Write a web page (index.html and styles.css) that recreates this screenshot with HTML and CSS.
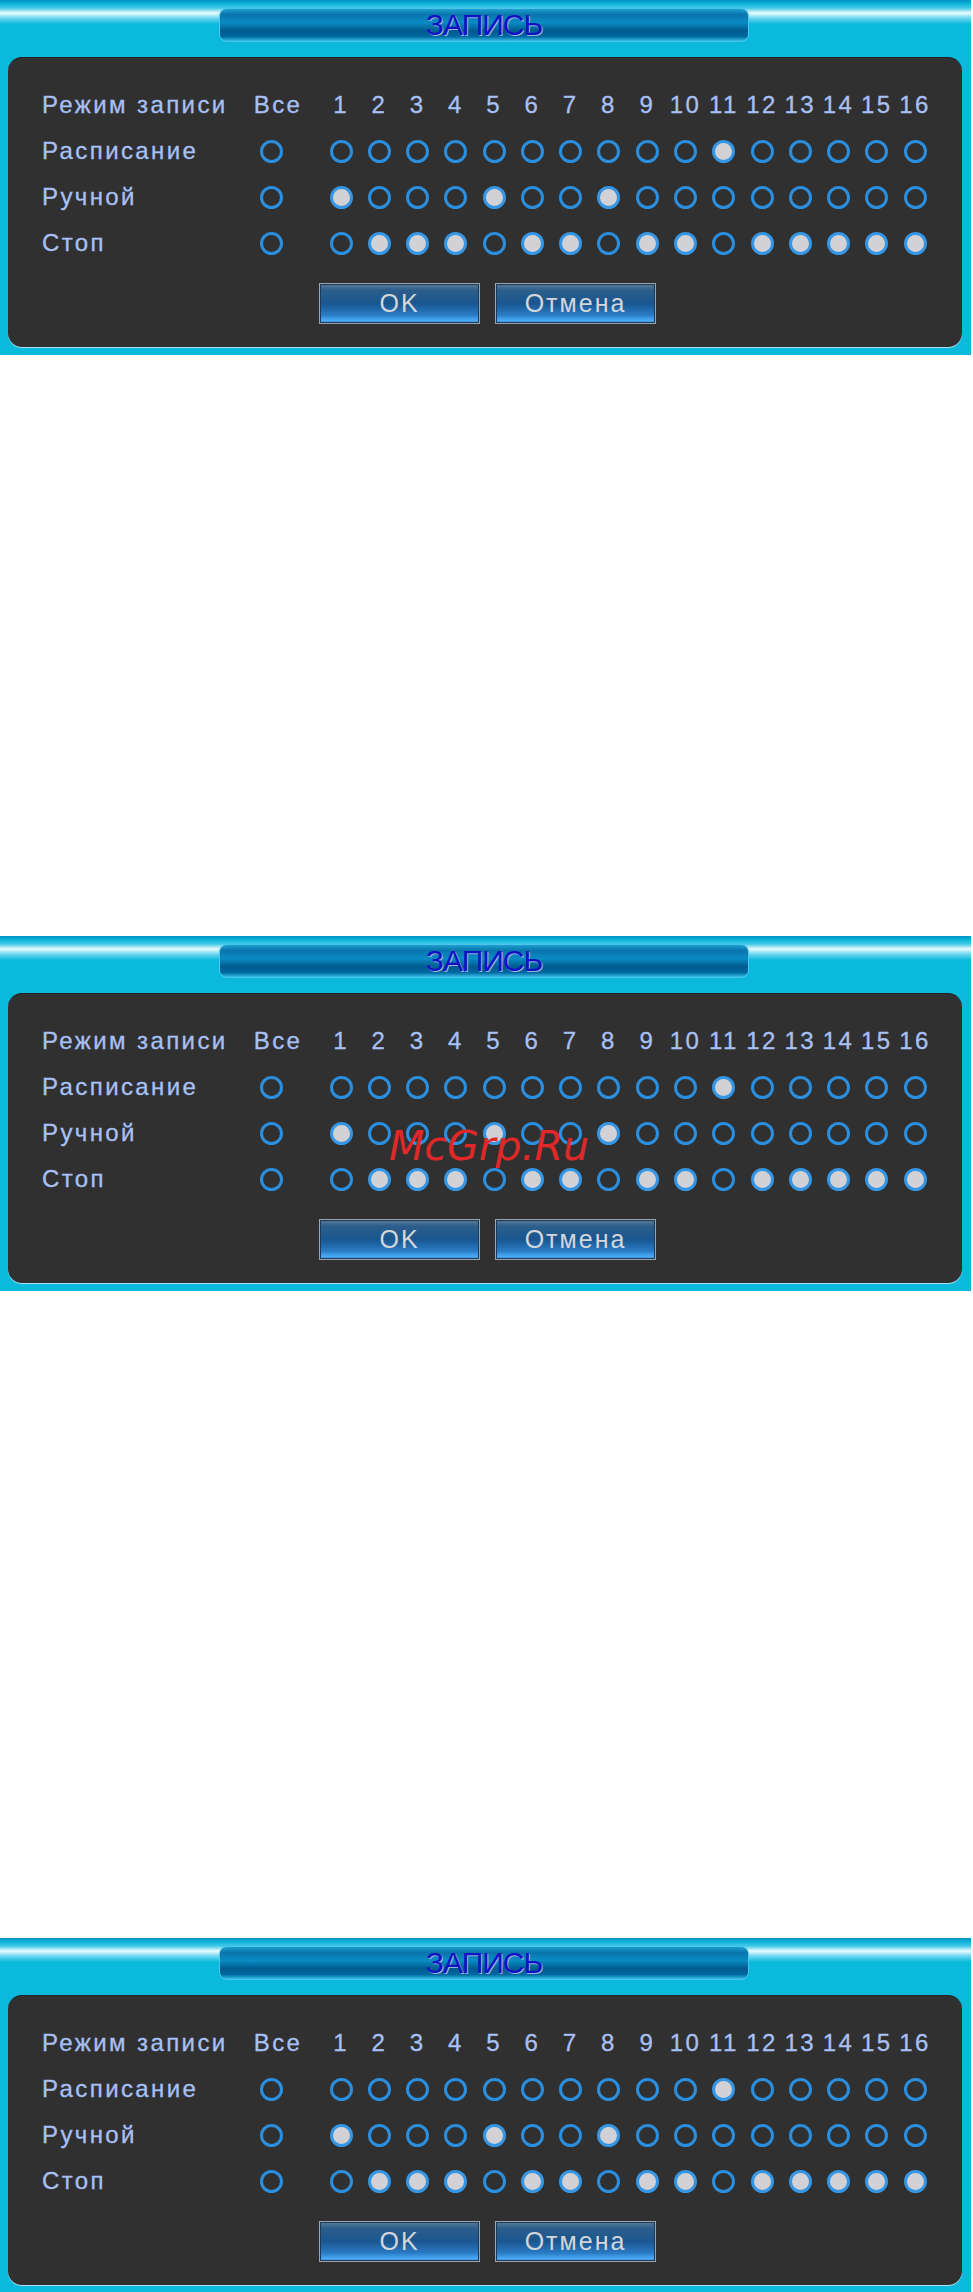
FILE: index.html
```html
<!DOCTYPE html>
<html lang="ru">
<head>
  <meta charset="UTF-8">
  <meta name="viewport" content="width=device-width, initial-scale=1.0">
  <title>Запись</title>
  <link rel="stylesheet" href="styles.css">
</head>
<body>
  <div class="dvr">
    <div class="dvr-top"><div class="dvr-title">ЗАПИСЬ</div></div>
    <div class="dvr-body">
      <div class="rec-grid"></div>
      <div class="btns">
        <button class="btn">OK</button>
        <button class="btn">Отмена</button>
      </div>
    </div>
  </div>

  <div class="dvr second">
    <div class="dvr-top"><div class="dvr-title">ЗАПИСЬ</div></div>
    <div class="dvr-body">
      <div class="rec-grid"></div>
      <div class="btns">
        <button class="btn">OK</button>
        <button class="btn">Отмена</button>
      </div>
    </div>
    <div class="watermark">McGrp.Ru</div>
  </div>

  <div class="dvr third">
    <div class="dvr-top"><div class="dvr-title">ЗАПИСЬ</div></div>
    <div class="dvr-body">
      <div class="rec-grid"></div>
      <div class="btns">
        <button class="btn">OK</button>
        <button class="btn">Отмена</button>
      </div>
    </div>
  </div>

  <script>
    const rows = [
      { name: 'Расписание', on: [11] },
      { name: 'Ручной', on: [1, 5, 8] },
      { name: 'Стоп', on: [2, 3, 4, 6, 7, 9, 10, 12, 13, 14, 15, 16] }
    ];

    document.querySelectorAll('.rec-grid').forEach(grid => {
      let html = '<div class="cell label">Режим записи</div><div class="cell head all">Все</div><div></div>';
      for (let i = 1; i <= 16; i++) {
        html += '<div class="cell head">' + i + '</div>';
      }
      rows.forEach(row => {
        html += '<div class="cell label">' + row.name + '</div><div class="cell"><span class="dot"></span></div><div></div>';
        for (let i = 1; i <= 16; i++) {
          const on = row.on.includes(i) ? ' on' : '';
          html += '<div class="cell"><span class="dot' + on + '"></span></div>';
        }
      });
      grid.innerHTML = html;
    });
  </script>
</body>
</html>
```

FILE: styles.css
```css
body {
  margin: 0;
  background-color: #fff;
  font-family: "Liberation Sans", Arial, sans-serif;
}
.dvr {
  position: relative;
  width: 971px;
  height: 355px;
  box-sizing: border-box;
  background: linear-gradient(to bottom, #0590c0 0, #08b0d8 3px, #40c8e8 8px, #eafcff 13px, #70d8f0 18px, #0ab9db 24px, #0ab9db 100%);
}
.second {
  margin-top: 581px;
}
.third {
  margin-top: 647px;
}
.dvr-top {
  height: 57px;
  display: flex;
  justify-content: center;
  padding-top: 8px;
  box-sizing: border-box;
}
.dvr-title {
  width: 528px;
  height: 32px;
  margin-left: -3px;
  border: 1px solid #4cc6ea;
  border-radius: 8px;
  background: linear-gradient(to bottom, #1c9ed0 0, #0a74ac 18%, #0a8cc4 42%, #005a8e 68%, #0068a0 86%, #36bee8 100%);
  color: #1212c4;
  font-size: 30px;
  letter-spacing: -1px;
  line-height: 32px;
  text-align: center;
  text-shadow: 1px 1px 0 #98b4dc;
}
.dvr-body {
  height: 290px;
  margin: 0 9px 0 8px;
  box-sizing: border-box;
  padding: 24px 0 0 34px;
  background-color: #303030;
  border-top: 1px solid #222;
  border-radius: 14px;
  box-shadow: 0 1px 0 #a8e4f4;
}
.rec-grid {
  display: grid;
  grid-template-columns: 210px 38px 32px repeat(16, 38.27px);
  grid-auto-rows: 46px;
  color: #a8c0f4;
  font-size: 24px;
  letter-spacing: 2.4px;
  -webkit-text-stroke: 0.3px #a8c0f4;
}
.cell {
  display: flex;
  align-items: center;
  justify-content: center;
  white-space: nowrap;
}
.label {
  justify-content: flex-start;
}
.head.all {
  padding-left: 14px;
}
.dot {
  width: 23px;
  height: 23px;
  box-sizing: border-box;
  border: 3px solid #2b8fe0;
  border-radius: 50%;
}
.dot.on {
  background-color: #d2d2d6;
  border-color: #3496e4;
}
.btns {
  display: flex;
  justify-content: center;
  gap: 15px;
  margin: 17px 0 0 -29px;
}
.btn {
  width: 161px;
  height: 41px;
  padding: 0;
  border: 1px solid #9aa4ae;
  box-shadow: inset 0 0 0 1px #1c3a58;
  background: linear-gradient(to bottom, #5c7c9a 0, #2c5e8a 16%, #1a5690 50%, #2a7cc6 80%, #4aa8f6 93%, #3a90d8 100%);
  color: #d4d6da;
  font-family: "Liberation Sans", Arial, sans-serif;
  font-size: 25px;
  letter-spacing: 2px;
  cursor: pointer;
}
.watermark {
  position: absolute;
  left: 389px;
  top: 190px;
  color: #e02828;
  font-family: "DejaVu Sans", sans-serif;
  font-style: italic;
  font-size: 41px;
  line-height: 41px;
}
```
